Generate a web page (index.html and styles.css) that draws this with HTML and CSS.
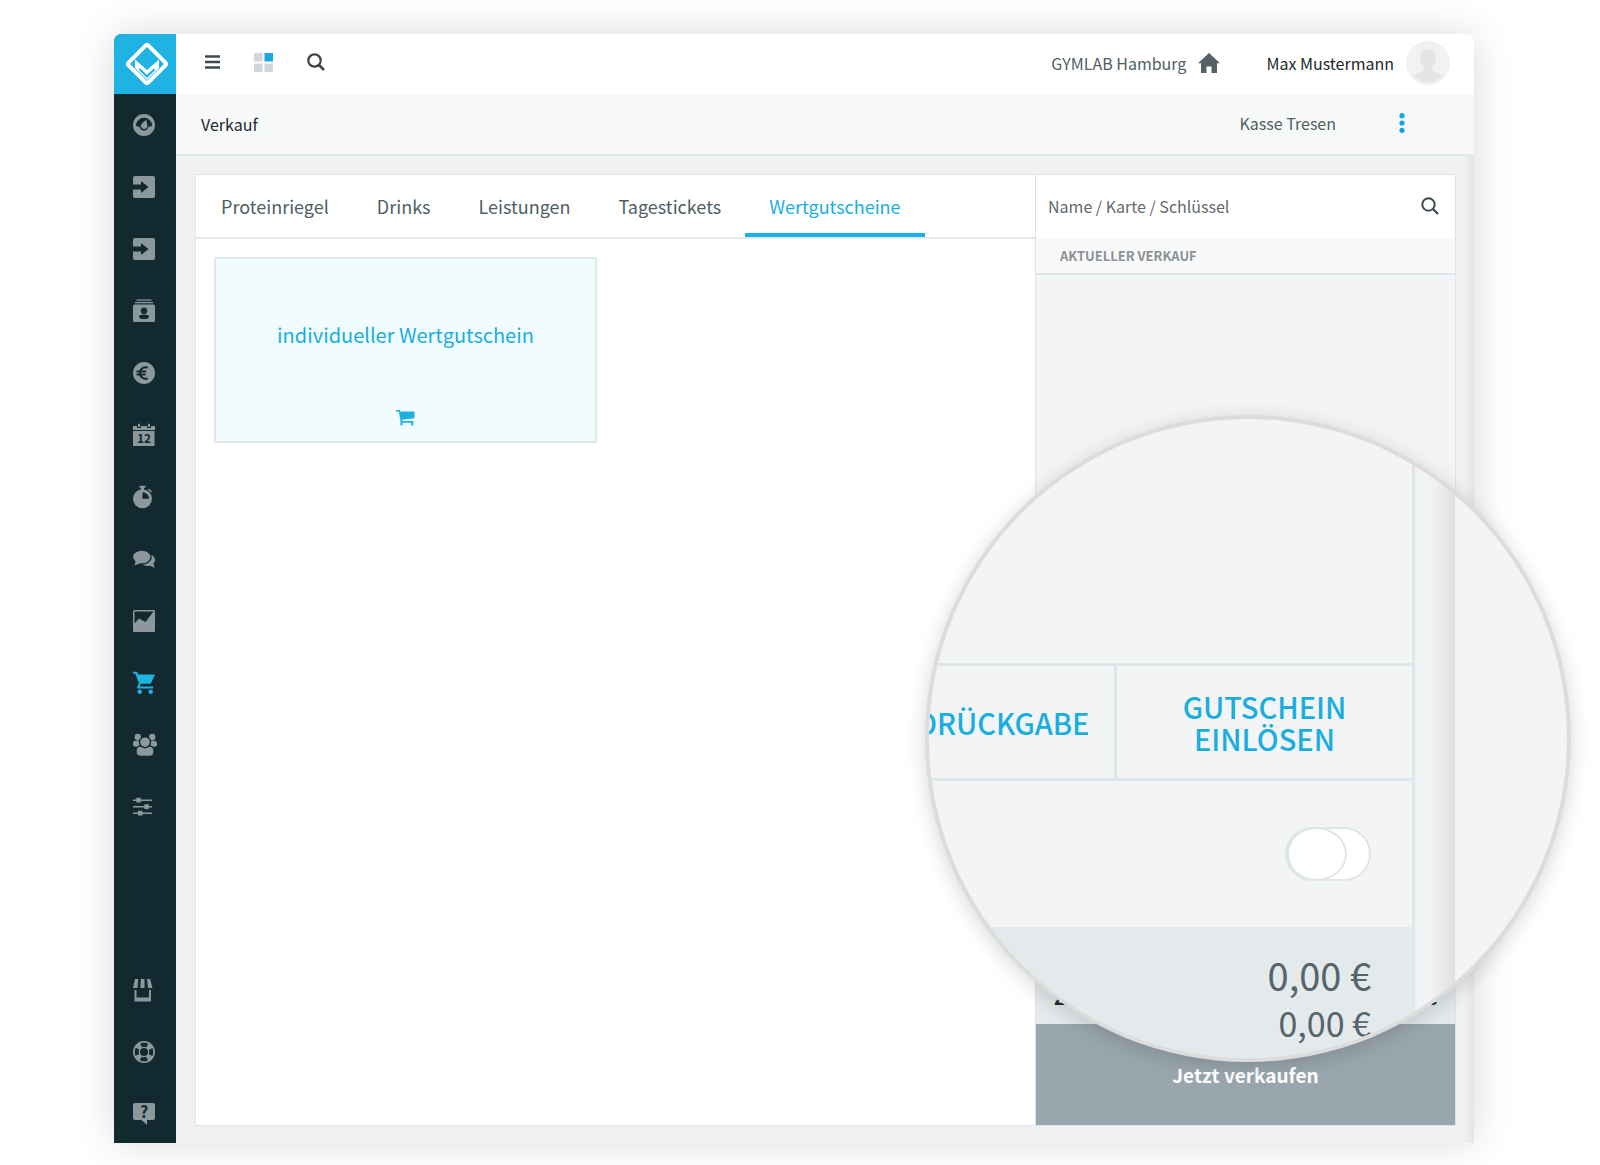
FILE: index.html
```html
<!DOCTYPE html>
<html lang="de">
<head>
  <meta charset="UTF-8" />
  <meta name="viewport" content="width=device-width, initial-scale=1.0" />
  <title>Verkauf</title>
  <link rel="stylesheet" href="styles.css">
</head>
<body>

<div class="stage">
  <div class="app">

    <!-- Seitenleiste -->
    <nav class="sidebar" aria-label="Hauptmenü">
      <a class="logo" href="#" aria-label="Startseite">
        <svg width="46" height="46" viewBox="0 0 46 46">
          <rect x="9" y="9" width="28" height="28" rx="2" transform="rotate(45 23 23)" fill="none" stroke="#fff" stroke-width="4"/>
          <path d="M11 18.500 L23 29 L35 18.500 V27 L23 39 L11 27 Z" fill="#fff"/>
          <path d="M15.500 26.800 V29.800 L23 37 L30.500 29.800 V26.800 L23 34 Z" fill="#1fb3e3"/>
        </svg>
      </a>

      <ul class="nav">
        <li><a href="#" aria-label="Dashboard"><svg viewBox="0 0 24 24"><circle cx="12" cy="12" r="11"/><path class="cut" d="M3.800 13a8.200 8.200 0 0 1 16.400 0l-3.700.8a4.600 4.600 0 0 1-9 0z"/><path d="M14.200 6.500c.3 2.500 1.200 4 1.200 6.200a3.200 3.200 0 0 1-6.400 0c0-2.200 2.900-3.700 5.200-6.200z"/></svg></a></li>
        <li><a href="#" aria-label="Check-in"><svg viewBox="0 0 24 24"><rect x="1" y="1" width="22" height="22" rx="2"/><path class="cut" d="M0 9.500h9V6l7.500 6L9 18v-3.500H0z"/></svg></a></li>
        <li><a href="#" aria-label="Check-out"><svg viewBox="0 0 24 24"><rect x="1" y="1" width="22" height="22" rx="2"/><path class="cut" d="M0 9.500h9V6l7.500 6L9 18v-3.500H0z"/></svg></a></li>
        <li><a href="#" aria-label="Kontakte"><svg viewBox="0 0 24 24"><path d="M4.500.500h15v1.200h-15zM3 3h18v1.200H3z"/><rect x="1" y="5.500" width="22" height="17.500" rx="1.500"/><circle class="cut" cx="12" cy="11.700" r="3.200"/><ellipse class="cut" cx="12" cy="17.800" rx="5" ry="2.300"/></svg></a></li>
        <li><a href="#" aria-label="Finanzen"><svg viewBox="0 0 24 24"><circle cx="12" cy="12" r="11"/><path class="line" d="M15.800 6.600a5.800 5.800 0 1 0 0 10.800M4.500 10.400h9.700M4.500 13.600h9"/></svg></a></li>
        <li><a href="#" aria-label="Kalender"><svg viewBox="0 0 24 24"><path d="M1 3h4v2h4V3h6v2h4V3h4v4H1zM1 8h21.500v15H1zM6 .8h2V4H6zM16 .8h2V4h-2z"/><text class="day" x="12" y="19.500" text-anchor="middle">12</text></svg></a></li>
        <li><a href="#" aria-label="Stoppuhr"><svg viewBox="0 0 24 24"><circle cx="10.500" cy="13.800" r="9.500"/><path d="M7.500.800h6v2h-1.500V5h-3V2.800H7.500zM17 3.500l3 3-1 1-3-3z"/><path class="cut" d="M10.500 7.200a6.600 6.600 0 0 1 6.600 6.600h-6.600z"/></svg></a></li>
        <li><a href="#" aria-label="Nachrichten"><svg viewBox="0 0 24 24"><ellipse cx="15.500" cy="13" rx="7.500" ry="6"/><path d="M17 18l5.500 3-1.500-6z"/><ellipse class="ring" cx="9.800" cy="10" rx="9.300" ry="7"/><path d="M4 13l-1.500 5.500L9 16z"/></svg></a></li>
        <li><a href="#" aria-label="Auswertungen"><svg viewBox="0 0 24 24"><rect x="1" y="1" width="22" height="22" rx="1.500"/><path class="cut" d="M2.500 2.500h19L13.500 13l-6.500-3.500-4.500 5z"/></svg></a></li>
        <li class="active"><a href="#" aria-label="Verkauf"><svg viewBox="0 0 24 24"><path d="M1 .800h4l1.200 2.600H23l-4.300 9.400H8.800l-1.200 2.600h13.600v2H5.500L5 16l2-4L3.300 2.800H1z"/><circle cx="7.700" cy="20.800" r="2.200"/><circle cx="18.700" cy="20.800" r="2.200"/></svg></a></li>
        <li><a href="#" aria-label="Mitarbeiter"><svg viewBox="0 0 26 24" class="wide"><circle cx="5.800" cy="4" r="3.200"/><circle cx="20.200" cy="4" r="3.200"/><rect x="1" y="7.800" width="8" height="6" rx="2.500"/><rect x="17" y="7.800" width="8" height="6" rx="2.500"/><rect class="ring" x="4" y="13" width="18" height="10.500" rx="4.500"/><circle class="ring" cx="13" cy="9.200" r="5.500"/></svg></a></li>
        <li><a href="#" aria-label="Einstellungen"><svg viewBox="0 0 24 24"><path d="M1 4.500h19v1.500H1zM1 11h19v1.500H1zM1 17.500h19v1.500H1zM4.300 2.800h4.500v4.800H4.300zM12.300 9.300h4.500v4.800h-4.500zM6 15.800h4.500v4.800H6z"/></svg></a></li>
      </ul>

      <ul class="nav nav-bottom">
        <li><a href="#" aria-label="Shop"><svg viewBox="0 0 24 24"><path d="M3 1h3.200l-.7 9H1zM8.800 1h3.700v9H8.300zM15 1h3.200l2.300 9h-4.500zM2.500 12h2v7.500h12.500V12h2v11.500H2.500z"/></svg></a></li>
        <li><a href="#" aria-label="Support"><svg viewBox="0 0 24 24"><circle cx="12" cy="12" r="11"/><circle class="buoy" cx="12" cy="12" r="7.300"/><circle class="cut" cx="12" cy="12" r="4"/></svg></a></li>
        <li><a href="#" aria-label="Hilfe"><svg viewBox="0 0 24 24"><path d="M3 1h18a2 2 0 0 1 2 2v13a2 2 0 0 1-2 2h-6v5l-5.500-5H3a2 2 0 0 1-2-2V3a2 2 0 0 1 2-2z"/><text class="mark" x="12" y="15.500" text-anchor="middle">?</text></svg></a></li>
      </ul>
    </nav>

    <div class="page">
      <!-- Kopfzeile -->
      <header class="topbar">
        <div class="tools">
          <button type="button" aria-label="Menü"><svg width="15" height="14" viewBox="0 0 15 14"><path d="M0 1.500h15M0 7h15M0 12.500h15" stroke="#3d4c54" stroke-width="2.600"/></svg></button>
          <button type="button" aria-label="Ansicht"><svg width="19" height="19" viewBox="0 0 19 19"><path d="M0 0h8.500v8.500H0zM0 10.500h8.500V19H0zM10.500 10.500H19V19h-8.500z" fill="#d3d6d8"/><path d="M10.500 0H19v8.500h-8.500z" fill="#1ba9e0"/></svg></button>
          <button type="button" aria-label="Suche"><svg width="18" height="18" viewBox="0 0 18 18"><circle cx="7.500" cy="7.500" r="6.200" fill="none" stroke="#3c4144" stroke-width="2.200"/><path d="M12 12l5 5" stroke="#3c4144" stroke-width="2.500"/></svg></button>
        </div>
        <div class="account">
          <a class="studio" href="#">GYMLAB Hamburg
            <svg width="22" height="20" viewBox="0 0 22 20"><path d="M11 0l11 10.200h-3V20h-5.500v-6.500h-5V20H3v-9.800H0z" fill="#566067"/></svg>
          </a>
          <a class="user" href="#">Max Mustermann
            <svg width="44" height="44" viewBox="0 0 44 44"><circle cx="22" cy="22" r="22" fill="#f2f2f2"/><path d="M22 8c5 0 8 3.500 8 8.500 0 4-1.500 7-3.500 9v3.500c2 2.500 8 3 10.500 6.500a22 22 0 0 1-30 0c2.500-3.500 8.500-4 10.500-6.500v-3.500c-2-2-3.500-5-3.500-9C14 11.500 17 8 22 8z" fill="#e5e5e5"/></svg>
          </a>
        </div>
      </header>

      <div class="subbar">
        <h1>Verkauf</h1>
        <div class="register">
          <span>Kasse Tresen</span>
          <button type="button" aria-label="Optionen"><svg width="6" height="20" viewBox="0 0 6 20" fill="#0fa6e3"><circle cx="3" cy="2.700" r="2.600"/><circle cx="3" cy="10" r="2.600"/><circle cx="3" cy="17.300" r="2.600"/></svg></button>
        </div>
      </div>

      <main>
        <div class="panel">
          <!-- Artikel -->
          <section class="articles">
            <nav class="tabs">
              <a href="#">Proteinriegel</a>
              <a href="#">Drinks</a>
              <a href="#">Leistungen</a>
              <a href="#">Tagestickets</a>
              <a href="#" class="active">Wertgutscheine</a>
            </nav>
            <button type="button" class="tile">
              <span>individueller Wertgutschein</span>
              <svg width="19" height="16" viewBox="0 0 19 16" fill="#1fb0e2"><path d="M0 0h3.800l.5 1.500H18.500v6.800L6 9.800l.2 1.200h11v4.500h-2v-2.700H6.500v2.700h-2V11L2.800 1.500H0z"/></svg>
            </button>
          </section>

          <!-- Aktueller Verkauf -->
          <aside class="sale">
            <form class="search">
              <input type="text" placeholder="Name / Karte / Schlüssel" aria-label="Name / Karte / Schlüssel">
              <button type="submit" aria-label="Suchen"><svg width="18" height="18" viewBox="0 0 18 18"><circle cx="7.500" cy="7.500" r="6.200" fill="none" stroke="#3a4a52" stroke-width="2"/><path d="M12 12l5 5" stroke="#3a4a52" stroke-width="2.300"/></svg></button>
            </form>
            <h2>AKTUELLER VERKAUF</h2>
            <div class="items"></div>
            <div class="total"><span>Zu zahlen</span><span>0,00 €</span></div>
            <button type="button" class="sell">Jetzt verkaufen</button>
          </aside>
        </div>
      </main>
    </div>
  </div>

  <!-- Lupe -->
  <div class="lens">
    <div class="lens-panel">
      <div class="lens-space"></div>
      <div class="lens-actions">
        <button type="button">PFANDRÜCKGABE</button>
        <button type="button">GUTSCHEIN<br>EINLÖSEN</button>
      </div>
      <div class="lens-option">
        <input type="checkbox" class="toggle" aria-label="Option">
      </div>
      <div class="lens-sum">
        <div class="big">0,00 €</div>
        <div>0,00 €</div>
      </div>
    </div>
    <div class="lens-edge"></div>
  </div>
</div>

</body>
</html>
```
FILE: styles.css
```css
* {
  box-sizing: border-box;
}

body {
  margin: 0;
  background: #fff;
  color: #4f5e65;
  font-family: "Noto Sans CJK JP", "Open Sans", sans-serif;
  font-size: 16px;
  line-height: 24px;
}

a {
  color: inherit;
  text-decoration: none;
}

button {
  margin: 0;
  padding: 0;
  border: 0;
  background: none;
  color: inherit;
  font: inherit;
  cursor: pointer;
}

svg {
  display: block;
  flex: none;
}

.stage {
  position: relative;
  display: flex;
  min-height: 100vh;
  padding: 34px 126px 22px 114px;
  overflow: hidden;
}

.app {
  display: flex;
  flex: 1;
  overflow: hidden;
  border-radius: 8px 8px 0 0;
  background: #eff1f3;
  box-shadow: 0 0 40px rgba(0, 0, 0, 0.15);
}

/* Seitenleiste */
.sidebar {
  display: flex;
  flex-direction: column;
  flex: none;
  width: 62px;
  background: #132930;
}

.logo {
  display: flex;
  align-items: center;
  justify-content: center;
  height: 60px;
  padding-left: 4px;
  background: #1fb3e3;
}

.nav {
  margin: 0;
  padding: 0;
  list-style: none;
}

.nav-bottom {
  margin-top: auto;
  margin-bottom: -2px;
}

.nav a {
  display: flex;
  align-items: center;
  height: 62px;
  padding-left: 18px;
}

.nav svg {
  width: 24px;
  height: 24px;
  fill: #8b989c;
}

.nav svg.wide {
  width: 26px;
}

.nav .active svg {
  fill: #1fb3e3;
}

.nav .cut {
  fill: #132930;
}

.nav .line {
  fill: none;
  stroke: #132930;
  stroke-width: 2px;
}

.nav .ring {
  stroke: #132930;
  stroke-width: 1.4px;
}

.nav .buoy {
  fill: none;
  stroke: #132930;
  stroke-width: 4px;
  stroke-dasharray: 6.5px 4.97px;
  stroke-dashoffset: 3.25px;
}

.day,
.mark {
  fill: #132930;
  font-weight: 700;
  font-size: 12px;
}

.mark {
  font-size: 16px;
}

/* Kopfzeile */
.page {
  display: flex;
  flex: 1;
  flex-direction: column;
  min-width: 0;
}

.topbar {
  display: flex;
  align-items: center;
  justify-content: space-between;
  height: 60px;
  padding: 0 24px 2px 29px;
  background: #fff;
}

.tools {
  display: flex;
  align-items: center;
  gap: 34px;
  padding-bottom: 2px;
}

.account,
.studio,
.user {
  display: flex;
  align-items: center;
}

.account {
  gap: 46px;
}

.studio,
.user {
  gap: 12px;
}

.user {
  color: #20292e;
}

.subbar {
  display: flex;
  align-items: center;
  justify-content: space-between;
  height: 62px;
  padding: 0 69px 0 25px;
  border-bottom: 2px solid #e3e8ea;
  background: #f7f9f9;
}

.subbar h1 {
  margin: 0;
  color: #20292e;
  font-weight: 400;
  font-size: 16px;
}

.register {
  display: flex;
  align-items: center;
  gap: 63px;
  padding-bottom: 2px;
}

main {
  display: flex;
  flex: 1;
  padding: 18px 18px 17px 19px;
  background: linear-gradient(to left, #e2e4e6, #eff1f3 10px);
}

.panel {
  display: flex;
  flex: 1;
  border: 1px solid #dfe5e7;
}

/* Artikel */
.articles {
  flex: 1;
  background: #fff;
}

.tabs {
  display: flex;
  height: 64px;
  padding-left: 1px;
  border-bottom: 2px solid #e4e9eb;
}

.tabs a {
  padding: 0 24px;
  border-bottom: 4px solid transparent;
  font-size: 18px;
  line-height: 62px;
}

.tabs .active {
  border-color: #14b2e8;
  color: #1aaedf;
}

.tile {
  display: flex;
  flex-direction: column;
  align-items: center;
  justify-content: flex-end;
  gap: 63px;
  width: 383px;
  height: 186px;
  margin: 18px;
  padding-bottom: 15px;
  border: 2px solid #e1e8ea;
  background: #f1fcff;
  color: #1aaedf;
  font-size: 20px;
}

/* Aktueller Verkauf */
.sale {
  display: flex;
  flex-direction: column;
  flex: none;
  width: 420px;
  border-left: 1px solid #dfe5e7;
  background: #f3f4f6;
}

.search {
  display: flex;
  align-items: center;
  height: 63px;
  padding: 0 16px 2px 12px;
  background: #fff;
}

.search input {
  flex: 1;
  min-width: 0;
  padding: 0;
  border: 0;
  outline: 0;
  background: none;
  font: inherit;
}

.search input::placeholder {
  color: #62696d;
  opacity: 1;
}

.sale h2 {
  margin: 0;
  padding: 0 24px;
  border-bottom: 2px solid #e1e6e8;
  background: #f8f9fb;
  color: #8c9295;
  font-weight: 700;
  font-size: 13px;
  line-height: 35px;
}

.items {
  flex: 1;
}

.total {
  display: flex;
  justify-content: space-between;
  padding: 8px 18px 15px;
  background: #e4e9eb;
  color: #20292e;
  font-weight: 700;
  font-size: 19px;
}

.sell {
  height: 101px;
  background: #99a6ad;
  color: #fff;
  font-weight: 700;
  font-size: 19px;
}

/* Lupe */
.lens {
  position: absolute;
  right: 29px;
  bottom: 103px;
  display: flex;
  width: 646px;
  height: 647px;
  overflow: hidden;
  border: 4px solid #dcdcdd;
  border-radius: 50%;
  background: #f3f4f6;
  box-shadow: 0 4px 20px rgba(0, 0, 0, 0.16);
}

.lens-panel {
  display: flex;
  flex-direction: column;
  flex: none;
  width: 486px;
  border-right: 3px solid #dfe6e8;
}

.lens-space {
  height: 244px;
}

.lens-actions {
  display: flex;
  justify-content: flex-end;
  height: 118px;
  border-top: 3px solid #dfe6e8;
  border-bottom: 3px solid #dfe6e8;
}

.lens-actions button {
  flex: none;
  width: 298px;
  border-left: 3px solid #dfe6e8;
  color: #1aaedf;
  font-weight: 500;
  font-size: 29px;
  line-height: 32px;
}

.lens-option {
  display: flex;
  align-items: center;
  justify-content: flex-end;
  height: 146px;
  padding-right: 41px;
}

.toggle {
  display: flex;
  width: 86px;
  height: 54px;
  margin: 0;
  border: 2px solid #dfe6e8;
  border-radius: 27px;
  appearance: none;
  background: #fff;
}

.toggle::before {
  content: "";
  width: 56px;
  margin: -2px 0 -2px -2px;
  border: 2px solid #dfe6e8;
  border-left-width: 4px;
  border-radius: 50%;
}

.lens-sum {
  flex: 1;
  padding: 24px 41px 0 0;
  background: #e4e9eb;
  color: #56646b;
  font-size: 34px;
  line-height: 48px;
  text-align: right;
}

.lens-sum .big {
  font-size: 38px;
}

.lens-edge {
  flex: none;
  width: 40px;
  background: linear-gradient(to left, #dedfe1, #eaecee 14px, #f0f2f4 26px);
}
```
